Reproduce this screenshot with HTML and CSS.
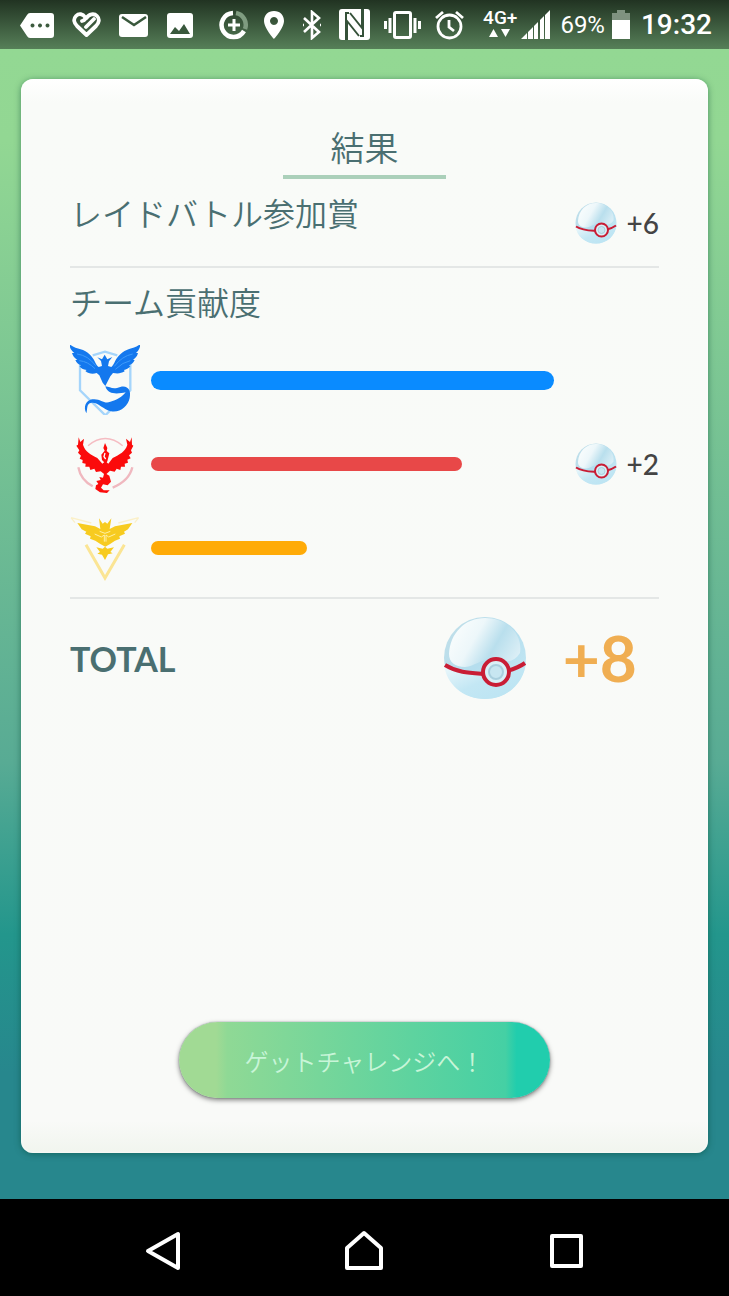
FILE: index.html
```html
<!DOCTYPE html>
<html lang="ja">
<head>
  <meta charset="UTF-8" />
  <meta name="viewport" content="width=device-width, initial-scale=1.0"/>
  <title>結果</title>
  <link rel="stylesheet" href="styles.css">
</head>
<body>

  <!-- shared ball drawing -->
  <svg class="defs" width="0" height="0" aria-hidden="true">
    <defs>
      <linearGradient id="ballBase" x1="0" y1="0" x2="1" y2="1">
        <stop offset="0" stop-color="#c3dfe8"/>
        <stop offset="0.5" stop-color="#b5deee"/>
        <stop offset="1" stop-color="#c9ebf6"/>
      </linearGradient>
      <linearGradient id="ballShine" x1="0" y1="0.3" x2="1" y2="0.7">
        <stop offset="0" stop-color="#fafdfd"/>
        <stop offset="0.35" stop-color="#edf7fa"/>
        <stop offset="0.65" stop-color="#b9dfed"/>
        <stop offset="1" stop-color="#dceff6"/>
      </linearGradient>
      <linearGradient id="ballLower" x1="0" y1="0" x2="1" y2="1">
        <stop offset="0" stop-color="#f3fbfd"/>
        <stop offset="0.5" stop-color="#c3e7f4"/>
        <stop offset="1" stop-color="#b9e3f2"/>
      </linearGradient>
      <symbol id="ball" viewBox="0 0 84 84">
        <circle cx="42" cy="42" r="41" fill="url(#ballBase)"/>
        <path d="M6 38C7 17 22 2 42 2C64 2 80 18 77 37C70 48 60 46 50 43C40 42 32 50 22 51C12 51 6 46 6 38Z" fill="url(#ballShine)"/>
        <path d="M1 48C16 58 30 57 42 58C58 60 72 52 83 45C82 67 64 83 42 83C20 83 3 68 1 48Z" fill="url(#ballLower)"/>
        <path d="M2 49C15 57 27 57 42 58M64 55Q75 52 82 47" fill="none" stroke="#c91d35" stroke-width="4"/>
        <circle cx="53" cy="56" r="13" fill="#d9f0f7" stroke="#c91d35" stroke-width="4"/>
        <circle cx="53" cy="56" r="7" fill="#c7e6f1" stroke="#a9cfde" stroke-width="2"/>
      </symbol>
    </defs>
  </svg>

  <header class="status-bar">
    <div class="notifications">
      <svg width="34" height="28" viewBox="0 0 34 28" fill="#fff"><path fill-rule="evenodd" d="M10 2H31Q34 2 34 5V24Q34 27 31 27H10Q8 27 7 25L0 14.500L7 4Q8 2 10 2ZM12.500 12.500a2 2 0 1 0 .01 0ZM20 12.500a2 2 0 1 0 .01 0ZM27.500 12.500a2 2 0 1 0 .01 0Z"/></svg>
      <svg width="29" height="28" viewBox="0 0 29 28" fill="none" stroke="#fff" stroke-width="3.800" stroke-linecap="round" stroke-linejoin="round"><path d="M14.500 7C17 3 22 2 25 5C28 8 27 12 24 15L14.500 24L5 15C2 12 1 8 4 5C7 2 11 3 13 6Q14 9 10 10M14 16L22 8"/></svg>
      <svg width="30" height="28" viewBox="0 0 30 28"><rect x="0" y="3" width="29" height="23" rx="3" fill="#fff"/><path d="M3 6L15 14L27 6" fill="none" stroke="#39583c" stroke-width="2.500"/></svg>
      <svg width="26" height="28" viewBox="0 0 26 28"><rect y="2" width="26" height="25" rx="3" fill="#fff"/><path d="M3 23L8 16L12 20L17 13L23 23Z" fill="#39583c"/></svg>
    </div>
    <div class="system">
      <svg width="30" height="30" viewBox="0 0 30 30" fill="none" stroke="#fff"><path d="M14 3A12 12 0 1 0 25 21" stroke-width="4.500"/><path d="M17 3A12 12 0 0 1 26 19" stroke="#7f9c80" stroke-width="4.500"/><path d="M15 9V21M9 15H21" stroke-width="3"/></svg>
      <svg width="22" height="30" viewBox="0 0 22 30"><path fill="#fff" fill-rule="evenodd" d="M11 1C5 1 1 5 1 11C1 18 11 29 11 29S21 18 21 11C21 5 17 1 11 1ZM11 7a4 4 0 1 1-.01 0Z"/></svg>
      <svg width="26" height="30" viewBox="-3 0 26 30" fill="none" stroke="#fff" stroke-width="2.600"><path d="M2 8L17 22L10 28V2L17 8L2 22M1 15H2M18 15H19"/></svg>
      <svg width="31" height="32" viewBox="0 0 31 32"><rect width="31" height="31" rx="3" fill="#fff"/><path d="M7 31V4L10 4M8 31V12L20 27M24 0V27H21M23 0V19L11 4" fill="none" stroke="#355139" stroke-width="2"/></svg>
      <svg width="37" height="30" viewBox="0 0 37 30" fill="none" stroke="#fff" stroke-width="3"><rect x="10.500" y="2.500" width="16" height="25" rx="1.500"/><path d="M1.500 11V19M6 8V23M31 8V23M35.500 11V19"/></svg>
      <svg width="29" height="30" viewBox="0 0 29 30" fill="none" stroke="#fff" stroke-width="2.800"><circle cx="14.500" cy="16.500" r="11.500"/><path d="M14 10V17L19 21M1 8L8 2M28 8L21 2"/></svg>
    </div>
    <div class="network">
      <div class="carrier">
        <span>4G+</span>
        <svg width="24" height="10" viewBox="0 0 24 10" fill="#fff"><path d="M1 9L5.500 1L10 9ZM13 1H22L17.500 9Z"/></svg>
      </div>
      <svg width="29" height="30" viewBox="0 0 29 30" fill="#fff"><path d="M0 29L6 23V29ZM7 22L12 17V29H7ZM13 16L17 12V29H13ZM19 10L23 6V29H19ZM24 5L29 0V29H24Z"/></svg>
    </div>
    <span class="percent">69%</span>
    <svg class="battery" width="20" height="31" viewBox="0 0 20 31"><path d="M6 1H14V4H19V12H1V4H6Z" fill="#7f9280"/><path d="M1 11H19V30H1Z" fill="#fff"/></svg>
    <time class="clock">19:32</time>
  </header>

  <main class="screen">
    <section class="card">
      <h1 class="title">結果</h1>

      <div class="prize">
        <h2 class="label">レイドバトル参加賞</h2>
        <div class="reward">
          <svg class="ball"><use href="#ball"/></svg>
          <span>+6</span>
        </div>
      </div>

      <div class="teams">
        <h2 class="label">チーム貢献度</h2>

        <div class="team">
          <svg class="logo" viewBox="30 45 210 210" role="img" aria-label="Mystic">
            <path d="M60 100V181L136 256L211 181V100M98 76L135 65L172 76" fill="none" stroke="#a5d5fb" stroke-width="7"/>
            <path fill="#1478ee" d="M28 42C48 60 72 54 90 74C104 87 106 103 116 111L126 108L123 93L112 82L126 88L134 74L142 88L157 81L147 94L144 108L154 111C165 102 165 86 181 73C198 54 220 59 241 42C241 54 235 62 228 69L234 69C232 79 226 84 219 89L224 90C220 99 214 103 207 106L211 109C205 116 199 119 192 120L194 124C183 131 172 131 159 129L151 139L141 158L136 168L128 158L118 136L110 129C98 133 85 131 76 123L80 120C69 119 63 115 58 108L64 106C54 103 49 98 46 90L52 89C42 84 39 78 36 69L43 69C34 62 29 54 28 42Z"/>
            <path fill="#1478ee" d="M136 169C151 170 157 180 181 171C204 165 214 182 209 204C204 229 180 249 153 244C128 239 114 215 92 219C79 222 83 237 79 250C69 231 78 211 96 208C122 204 132 224 151 215C169 211 188 200 197 187C177 191 144 197 136 169Z"/>
            <path d="M51 72Q84 76 107 107M58 92Q83 94 105 116M218 72Q186 78 163 109M211 92Q189 96 166 118" fill="none" stroke="#3e9bfa" stroke-width="3"/>
          </svg>
          <div class="track"><div class="bar mystic" style="width: 97.5%"></div></div>
        </div>

        <div class="team">
          <svg class="logo" viewBox="30 15 210 210" role="img" aria-label="Valor">
            <path d="M84 65Q136 22 188 65" fill="none" stroke="#f5bcc2" stroke-width="4"/>
            <path d="M55 130Q62 168 98 187M217 130Q208 170 158 191" fill="none" stroke="#f0b8bf" stroke-width="7"/>
            <path fill="#fb0b0b" d="M56 40L61 54L72 44L69 62C76 84 92 91 112 102L127 119L136 112L145 119L158 102C179 91 196 83 202 62L198 44L210 54L215 40L216 62L220 65L213 79L216 86L207 94L212 103L202 107L204 116L194 119L195 128L183 128L181 138L170 134L164 143L150 140L136 153L122 142L108 144L103 134L91 138L88 128L76 128L77 119L67 117L68 108L59 104L63 95L54 86L58 79L49 65L54 62Z"/>
            <path fill="#fb0b0b" d="M135 57L142 72L140 81L148 88L142 112L137 119L126 108L124 92L134 80L130 72Z"/>
            <path d="M135 87L132 98L137 105" fill="none" stroke="#fff" stroke-width="4"/>
            <path fill="#fb0b0b" d="M133 146L148 155L153 173L143 184L129 181L123 191L131 199L149 199L141 207L120 205L106 195L108 184L115 180L109 171L122 168L118 159L129 161Z"/>
          </svg>
          <div class="track"><div class="bar valor" style="width: 75.3%"></div></div>
          <div class="reward">
            <svg class="ball"><use href="#ball"/></svg>
            <span>+2</span>
          </div>
        </div>

        <div class="team">
          <svg class="logo" viewBox="30 24 210 210" role="img" aria-label="Instinct">
            <path d="M78 119L135 219L193 119" fill="none" stroke="#fbe594" stroke-width="9"/>
            <path d="M33 38L94 54M236 38L175 54M33 38L45 53M236 38L224 53" fill="none" stroke="#fbf0c8" stroke-width="4"/>
            <path fill="#f7cb1f" d="M52 54L105 64L121 72L117 40L128 56L135 51L142 56L154 40L149 72L165 64L217 54L204 73L192 80L195 86L178 94L180 101L165 107L149 118L136 125L121 117L106 107L90 101L92 94L75 86L79 80L65 73Z"/>
            <path fill="#f7cb1f" d="M109 127L128 131L135 125L142 131L162 127L151 141L158 145L144 148L135 165L126 149L112 146L120 141Z"/>
            <path d="M104 87L124 96L133 90V110M166 87L146 96L138 90V110M119 79L135 85L151 79" fill="none" stroke="#fff0a6" stroke-width="3"/>
          </svg>
          <div class="track"><div class="bar instinct" style="width: 37.8%"></div></div>
        </div>
      </div>

      <div class="total">
        <h2 class="total-label">TOTAL</h2>
        <svg class="ball big"><use href="#ball"/></svg>
        <span class="total-value">+8</span>
      </div>

      <button class="go" type="button">ゲットチャレンジへ！</button>
    </section>
  </main>

  <nav class="nav-bar">
    <button type="button" aria-label="Back">
      <svg width="42" height="42" viewBox="0 0 42 42"><path d="M36 4V38L6 21Z"/></svg>
    </button>
    <button type="button" aria-label="Home">
      <svg width="42" height="42" viewBox="0 0 42 42"><path d="M21 3L38 18V38H4V18Z"/></svg>
    </button>
    <button type="button" aria-label="Recent apps">
      <svg width="42" height="42" viewBox="0 0 42 42"><path d="M7 6H36V36H7Z"/></svg>
    </button>
  </nav>

</body>
</html>
```
FILE: styles.css
```css
* {
  box-sizing: border-box;
}

body {
  margin: 0;
  min-height: 100vh;
  display: flex;
  flex-direction: column;
  background: #000;
  font-family: Lato, "Noto Sans CJK JP", sans-serif;
  color: #4a6f71;
}

h1,
h2 {
  margin: 0;
  font-weight: 350;
}

button {
  border: none;
  cursor: pointer;
}

svg {
  display: block;
  flex-shrink: 0;
}

.defs {
  position: absolute;
}

/* status bar */
.status-bar {
  display: flex;
  align-items: center;
  height: 49px;
  padding: 0 17px 0 20px;
  background: linear-gradient(#213322, #567f58);
  color: #fff;
  font-family: Roboto, sans-serif;
}

.notifications {
  display: flex;
  align-items: center;
  gap: 18px;
  margin-right: auto;
}

.system {
  display: flex;
  align-items: center;
  gap: 14px;
  margin-right: 19px;
}

.network {
  display: flex;
  align-items: center;
  gap: 4px;
  margin-right: 10px;
}

.carrier {
  display: flex;
  flex-direction: column;
  align-items: center;
  padding-bottom: 4px;
  font-size: 19px;
  font-weight: 500;
  line-height: 20px;
}

.percent {
  font-size: 24px;
}

.battery {
  margin: 0 10px 0 6px;
}

.clock {
  font-size: 28px;
  font-weight: 500;
}

/* result card */
.screen {
  flex: 1;
  display: flex;
  padding: 30px 21px 46px;
  background: linear-gradient(#93d893, #92d793 8%, #58ab94 62%, #23968c 77%, #27878d 89%, #27878d);
}

.card {
  flex: 1;
  display: flex;
  flex-direction: column;
  padding: 45px 49px 55px;
  border-radius: 12px;
  background: linear-gradient(#fff, #f9fbf8 24px, #f9faf8 97%, #f1f5ee);
  box-shadow: 0 1px 6px rgba(0, 70, 50, 0.5), inset 0 0 3px #fff;
}

.title {
  align-self: center;
  width: 163px;
  padding-bottom: 3px;
  border-bottom: 4px solid #abd0ba;
  font-size: 34px;
  line-height: 48px;
  text-align: center;
}

.label {
  font-size: 32px;
  line-height: 40px;
}

.prize {
  display: flex;
  justify-content: space-between;
  align-items: flex-end;
  height: 89px;
  padding-bottom: 22px;
  border-bottom: 2px solid #e4e7e6;
}

.prize .label {
  margin-bottom: 10px;
}

.reward {
  display: flex;
  align-items: center;
  justify-content: space-between;
  width: 84px;
  color: #444;
  font-size: 28px;
  font-weight: 500;
  line-height: 42px;
}

.ball {
  width: 42px;
  height: 42px;
}

.teams {
  padding: 15px 0 7px;
  border-bottom: 2px solid #e4e7e6;
}

.teams .label {
  margin-bottom: 15px;
}

.team {
  display: grid;
  grid-template-columns: 70px 1fr 84px;
  gap: 11px;
  align-items: center;
  height: 84px;
}

.logo {
  width: 70px;
  height: 70px;
}

.bar {
  height: 14px;
  border-radius: 10px;
}

.mystic {
  height: 19px;
  background: #0a8bff;
}

.valor {
  background: #e84848;
}

.instinct {
  background: #ffab08;
}

.total {
  display: flex;
  align-items: center;
  padding: 17px 22px 0 0;
}

.total-label {
  margin-right: auto;
  font-size: 34px;
  font-weight: 700;
}

.big {
  width: 84px;
  height: 84px;
  margin-right: 36px;
}

.total-value {
  color: #f0ae52;
  font-size: 64px;
  font-weight: 700;
  line-height: 84px;
}

.go {
  align-self: center;
  width: 63%;
  height: 76px;
  margin-top: auto;
  border-radius: 38px;
  background: linear-gradient(90deg, #a1da94 10%, #8fd995 13%, #45d0a4 88%, #21cdad 91%);
  box-shadow: 0 2px 5px rgba(0, 0, 0, 0.5), 0 0 1px #567;
  color: #c8f5d8;
  font-family: "Noto Sans CJK JP", sans-serif;
  font-size: 24px;
  font-weight: 350;
}

/* android navigation */
.nav-bar {
  display: grid;
  grid-template-columns: repeat(3, 1fr);
  height: 97px;
  padding: 6px 62px 0;
}

.nav-bar button {
  display: flex;
  align-items: center;
  justify-content: center;
  background: none;
}

.nav-bar path {
  fill: none;
  stroke: #fff;
  stroke-width: 4;
  stroke-linejoin: round;
}
```
